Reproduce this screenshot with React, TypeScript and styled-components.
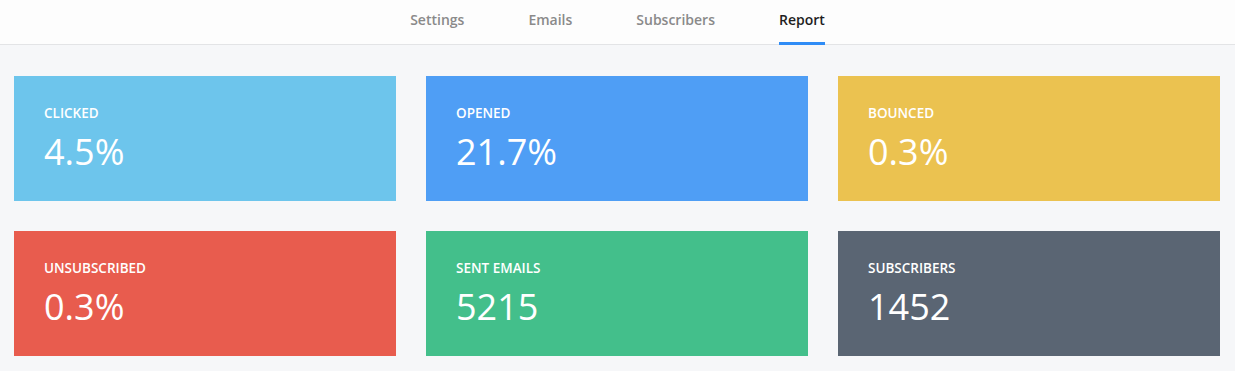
import React from "react";
import styled, { createGlobalStyle } from "styled-components";

const Global = createGlobalStyle`
  html, body { margin: 0; padding: 0; background: #f6f7f9; }
  body { font-family: "Open Sans", "Noto Sans", sans-serif; -webkit-font-smoothing: antialiased; }
`;

const Page = styled.div`
  width: 1235px;
  min-height: 371px;
  background: #f6f7f9;
`;

const Header = styled.nav`
  height: 44px;
  background: #fdfdfd;
  border-bottom: 1px solid #e3e4e6;
  display: flex;
  justify-content: center;
  gap: 64px;
`;

const Tab = styled.a<{ $active?: boolean }>`
  display: flex;
  align-items: center;
  box-sizing: border-box;
  height: 45px;
  padding-bottom: 3px;
  margin-bottom: -1px;
  font-size: 14px;
  font-weight: 600;
  color: ${(p) => (p.$active ? "#1f1f1f" : "#8a8a8a")};
  text-decoration: none;
  border-bottom: 3px solid ${(p) => (p.$active ? "#2f8cf6" : "transparent")};
  cursor: pointer;
`;

const Grid = styled.div`
  display: grid;
  grid-template-columns: repeat(3, 382px);
  gap: 30px;
  padding: 31px 15px 15px 14px;
`;

const Card = styled.div<{ $bg: string }>`
  background: ${(p) => p.$bg};
  height: 125px;
  box-sizing: border-box;
  padding: 27px 30px 0;
  color: #fff;
`;

const Label = styled.div`
  font-size: 13.5px;
  font-weight: 600;
  line-height: 20px;
  text-transform: uppercase;
`;

const Value = styled.div`
  font-size: 36px;
  font-weight: 400;
  line-height: 44px;
  margin-top: 7px;
`;

const stats = [
  { label: "Clicked", value: "4.5%", bg: "#6dc5ec" },
  { label: "Opened", value: "21.7%", bg: "#4f9ef5" },
  { label: "Bounced", value: "0.3%", bg: "#ebc250" },
  { label: "Unsubscribed", value: "0.3%", bg: "#e85c4e" },
  { label: "Sent Emails", value: "5215", bg: "#43bf8b" },
  { label: "Subscribers", value: "1452", bg: "#5a6573" },
];

export default function App() {
  return (
    <Page>
      <Global />
      <Header>
        <Tab>Settings</Tab>
        <Tab>Emails</Tab>
        <Tab>Subscribers</Tab>
        <Tab $active>Report</Tab>
      </Header>
      <Grid>
        {stats.map((s) => (
          <Card key={s.label} $bg={s.bg}>
            <Label>{s.label}</Label>
            <Value>{s.value}</Value>
          </Card>
        ))}
      </Grid>
    </Page>
  );
}
